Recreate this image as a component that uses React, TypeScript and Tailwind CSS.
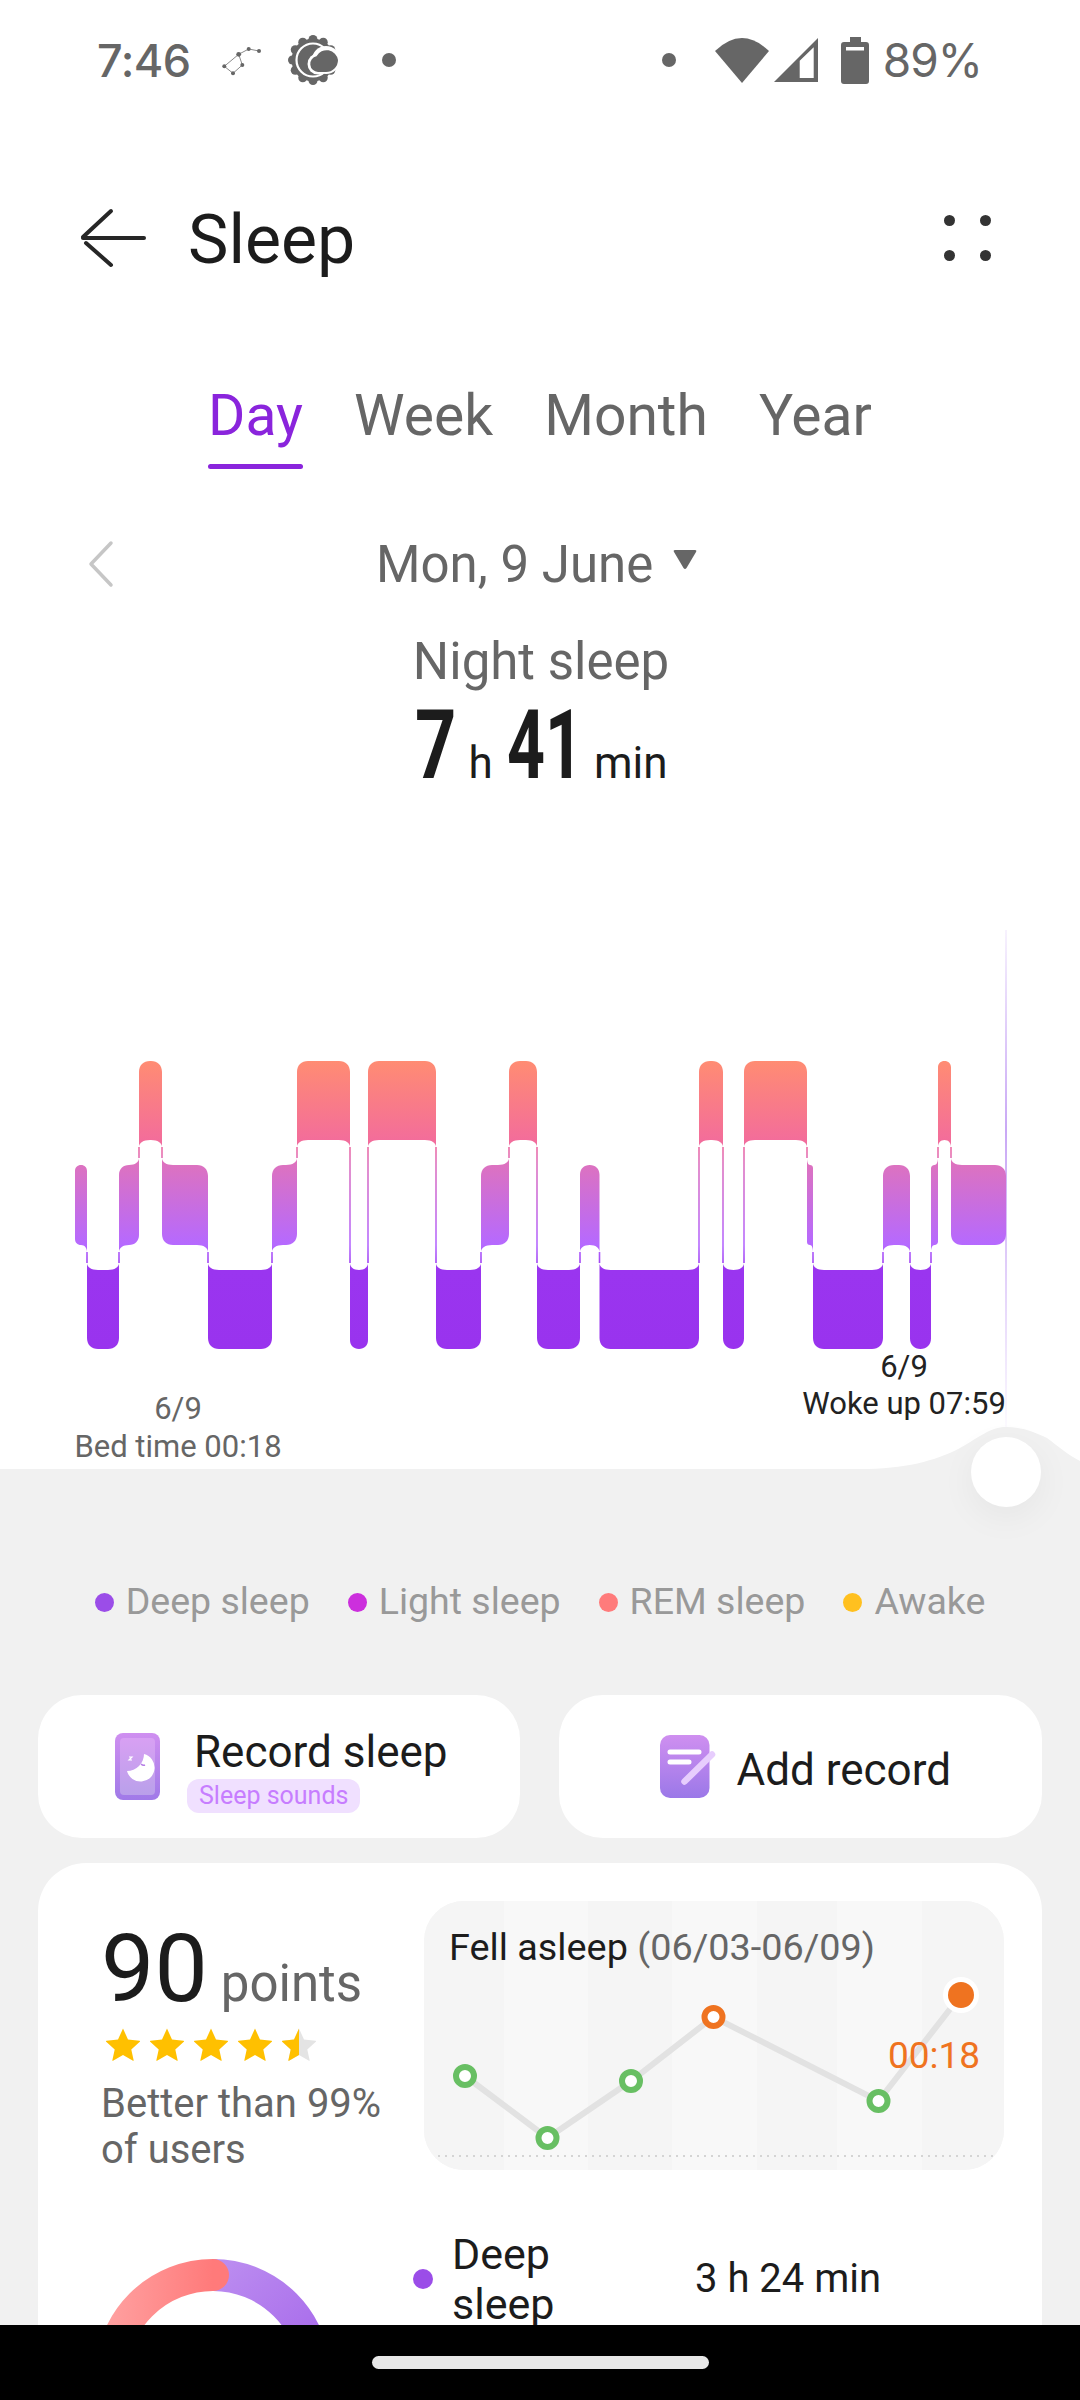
const roboto = "font-['Roboto',sans-serif]"

type Stage = "rem" | "light" | "deep"

const bands: Record<Stage, { top: number; bottom: number; rank: number }> = {
  rem: { top: 1061, bottom: 1140, rank: 2 },
  light: { top: 1165, bottom: 1245, rank: 1 },
  deep: { top: 1270, bottom: 1349, rank: 0 },
}

const segments: { stage: Stage; x0: number; x1: number }[] = [
  { stage: "light", x0: 75, x1: 87 },
  { stage: "deep", x0: 87, x1: 119 },
  { stage: "light", x0: 119, x1: 139 },
  { stage: "rem", x0: 139, x1: 162 },
  { stage: "light", x0: 162, x1: 208 },
  { stage: "deep", x0: 208, x1: 272 },
  { stage: "light", x0: 272, x1: 297 },
  { stage: "rem", x0: 297, x1: 350 },
  { stage: "deep", x0: 350, x1: 368 },
  { stage: "rem", x0: 368, x1: 436 },
  { stage: "deep", x0: 436, x1: 481 },
  { stage: "light", x0: 481, x1: 509 },
  { stage: "rem", x0: 509, x1: 537 },
  { stage: "deep", x0: 537, x1: 580 },
  { stage: "light", x0: 580, x1: 599.5 },
  { stage: "deep", x0: 599.5, x1: 699 },
  { stage: "rem", x0: 699, x1: 723 },
  { stage: "deep", x0: 723, x1: 744 },
  { stage: "rem", x0: 744, x1: 807 },
  { stage: "light", x0: 807, x1: 813 },
  { stage: "deep", x0: 813, x1: 883 },
  { stage: "light", x0: 883, x1: 910 },
  { stage: "deep", x0: 910, x1: 931 },
  { stage: "light", x0: 931, x1: 938 },
  { stage: "rem", x0: 938, x1: 951 },
  { stage: "light", x0: 951, x1: 1006 },
]

// rounded corner from the current point to (x, y), pulled toward (cx, cy)
function corner(fromX: number, fromY: number, cx: number, cy: number, x: number, y: number) {
  const k = 0.6
  return `C${fromX + (cx - fromX) * k} ${fromY + (cy - fromY) * k} ${x + (cx - x) * k} ${y + (cy - y) * k} ${x} ${y}`
}

function buildChartPath() {
  let d = ""
  segments.forEach((seg, i) => {
    const band = bands[seg.stage]
    const prev = segments[i - 1] ? bands[segments[i - 1].stage] : null
    const next = segments[i + 1] ? bands[segments[i + 1].stage] : null
    const r = Math.min(11, (seg.x1 - seg.x0) / 2)
    const { top: T, bottom: B } = band
    const { x0, x1 } = seg
    const tl = prev && prev.rank > band.rank ? T - 7 : T + r
    const tr = next && next.rank > band.rank ? T - 7 : T + r
    const bl = prev && prev.rank < band.rank ? B + 7 : B - r
    const br = next && next.rank < band.rank ? B + 7 : B - r
    d += `M${x0} ${tl}`
    d += corner(x0, tl, x0, T, x0 + r, T)
    d += `L${x1 - r} ${T}`
    d += corner(x1 - r, T, x1, T, x1, tr)
    d += `L${x1} ${br}`
    d += corner(x1, br, x1, B, x1 - r, B)
    d += `L${x0 + r} ${B}`
    d += corner(x0 + r, B, x0, B, x0, bl)
    d += "Z"
    if (next) {
      const upper = next.rank > band.rank ? next : band
      const lower = next.rank > band.rank ? band : next
      d += `M${x1 - 0.8} ${upper.bottom + 7}H${x1 + 0.8}V${lower.top - 7}H${x1 - 0.8}Z`
    }
  })
  return d
}

const trend = [
  { x: 466, y: 2076, hot: false },
  { x: 548.5, y: 2138, hot: false },
  { x: 632, y: 2081, hot: false },
  { x: 714.5, y: 2017, hot: true },
  { x: 879.5, y: 2101, hot: false },
]

function StatusBar() {
  return (
    <div className="h-[120px] flex items-center pl-[97px] pr-[98px] text-[#666] font-['Inter',sans-serif]">
      <span className="text-[45px] leading-none font-medium tracking-[-0.5px]">7:46</span>
      <svg width="42" height="32" viewBox="0 0 42 32" className="ml-[30px] mt-[4px]" fill="#666">
        <path d="M3.3 20.3L12 27.3L21.3 19L17.7 8.3L3.3 20.3M17.7 8.3L27.7 3L38 5" fill="none" stroke="#8a8a8a" strokeWidth="1" />
        <circle cx="3.3" cy="20.3" r="2" />
        <circle cx="12" cy="27.3" r="2" />
        <circle cx="21.3" cy="19" r="2" />
        <circle cx="17.7" cy="8.3" r="2.4" />
        <circle cx="27.7" cy="3" r="2" />
        <circle cx="38" cy="5" r="2" />
      </svg>
      <svg width="50" height="50" viewBox="0 0 50 50" className="ml-[25px]" fill="#666">
        <circle cx="25" cy="25" r="21.5" />
        {Array.from({ length: 12 }).map((_, i) => (
          <circle
            key={i}
            cx={25 + 20.5 * Math.cos((i * Math.PI) / 6)}
            cy={25 + 20.5 * Math.sin((i * Math.PI) / 6)}
            r="4.5"
          />
        ))}
        <circle cx="25" cy="25" r="16.5" fill="none" stroke="#fff" strokeWidth="2.2" />
        <g fill="#fff">
          <circle cx="38" cy="25" r="14" />
          <circle cx="30" cy="29" r="10.5" />
        </g>
        <path d="M30 37a8 8 0 0 1-1.5-15.8A11.5 11.5 0 0 1 50 25a12 12 0 0 1-12 12Z" />
      </svg>
      <span className="ml-[44px] w-[14px] h-[14px] rounded-full bg-[#666]" />
      <span className="ml-auto w-[14px] h-[14px] rounded-full bg-[#666]" />
      <svg width="54" height="45" viewBox="0 0 54 45" className="ml-[39px]" fill="#666">
        <path d="M27 45L0 13Q27 -13 54 13Z" />
      </svg>
      <svg width="44" height="44" viewBox="0 0 44 44" className="ml-[5px]" fill="#666">
        <path fillRule="evenodd" d="M0 44L44 0V44ZM25.7 40H39.7V9.3L25.7 22.7Z" />
      </svg>
      <svg width="28" height="47" viewBox="0 0 28 47" className="ml-[23px]">
        <path fill="#666" d="M9 0H20V5H25Q28 5 28 8V44Q28 47 25 47H3Q0 47 0 44V8Q0 5 3 5H9Z" />
        <rect x="5" y="10" width="18" height="3.5" fill="#fff" />
      </svg>
      <span className="ml-[14px] text-[46px] leading-none tracking-[-1px]">89%</span>
    </div>
  )
}

function Header() {
  return (
    <div className="mt-[68px] h-[100px] flex items-center pl-[80px] pr-[89px]">
      <svg width="68" height="60" viewBox="0 0 68 60" fill="none" stroke="#262626" strokeWidth="4" strokeLinecap="round">
        <path d="M3 30H64" />
        <path d="M31 3L3 29" />
        <path d="M6 35L31 57" />
      </svg>
      <span className={`${roboto} ml-[40px] mt-[3px] text-[68px] leading-none text-[#1c1c1c]`}>Sleep</span>
      <div className="ml-auto grid grid-cols-2 gap-x-[25px] gap-y-[24px]">
        <span className="w-[11px] h-[11px] rounded-full bg-[#333]" />
        <span className="w-[11px] h-[11px] rounded-full bg-[#333]" />
        <span className="w-[11px] h-[11px] rounded-full bg-[#333]" />
        <span className="w-[11px] h-[11px] rounded-full bg-[#333]" />
      </div>
    </div>
  )
}

function Tabs() {
  const tabs = ["Day", "Week", "Month", "Year"]
  return (
    <div className={`${roboto} mt-[96px] h-[89px] flex justify-center gap-[51px] text-[57px] leading-[64px] text-[#666]`}>
      {tabs.map((t, i) => (
        <div key={t} className="flex flex-col">
          <span className={i === 0 ? "text-[#8a24dc]" : ""}>{t}</span>
          {i === 0 && <span className="mt-[16px] h-[5px] rounded-full bg-[#8a24dc]" />}
        </div>
      ))}
    </div>
  )
}

function Summary() {
  return (
    <div className={roboto}>
      <div className="mt-[61px] h-[60px] flex items-center pl-[88px]">
        <svg width="26" height="48" viewBox="0 0 26 48" fill="none" stroke="#c6c6c6" strokeWidth="3.5" strokeLinecap="round" strokeLinejoin="round">
          <path d="M23 3L3 24L23 45" />
        </svg>
        <span className="ml-[262px] text-[51px] leading-none text-[#666]">Mon, 9 June</span>
        <svg width="24" height="20" viewBox="0 0 24 20" className="ml-[20px] mb-[8px]" fill="#666">
          <path d="M2 0H22Q24 0 23 2L13.5 18Q12 20 10.5 18L1 2Q0 0 2 0Z" />
        </svg>
      </div>
      <div className="mt-[37px] h-[60px] flex items-center justify-center pl-[2px] text-[51px] leading-none text-[#666]">
        Night sleep
      </div>
      <div className="h-[100px] flex items-baseline justify-center pt-[4px] text-[44px] leading-[100px] text-[#1c1c1c]">
        <span className="inline-block -ml-[4px] -mr-[7px] text-[96px] font-bold scale-x-[0.75]">7</span>
        <span className="ml-[12px]">h</span>
        <span className="inline-block -ml-[3px] -mr-[17px] text-[96px] font-bold scale-x-[0.69]">41</span>
        <span className="ml-[11px]">min</span>
      </div>
    </div>
  )
}

function SleepChart() {
  return (
    <div className={`${roboto} relative mt-[139px] h-[539px]`}>
      <svg width="1080" height="539" viewBox="0 930 1080 539" className="block">
        <defs>
          <linearGradient id="stages" gradientUnits="userSpaceOnUse" x1="0" y1="1061" x2="0" y2="1349">
            <stop offset="0" stopColor="#ff8c73" />
            <stop offset="0.274" stopColor="#f36d9a" />
            <stop offset="0.361" stopColor="#dc72c0" />
            <stop offset="0.639" stopColor="#b569ff" />
            <stop offset="0.726" stopColor="#9a35ef" />
            <stop offset="1" stopColor="#9933ee" />
          </linearGradient>
          <linearGradient id="cursor" gradientUnits="userSpaceOnUse" x1="0" y1="930" x2="0" y2="1430">
            <stop offset="0" stopColor="#c9a8f5" stopOpacity="0.15" />
            <stop offset="0.4" stopColor="#c9a8f5" />
            <stop offset="1" stopColor="#c9a8f5" stopOpacity="0.05" />
          </linearGradient>
        </defs>
        <rect x="1005" y="930" width="2" height="500" fill="url(#cursor)" />
        <path d={buildChartPath()} fill="url(#stages)" />
      </svg>
      <div className="absolute left-[66px] top-[460px] w-[224px] text-center text-[31px] leading-[38px] text-[#666]">
        <div>6/9</div>
        <div>Bed time 00:18</div>
      </div>
      <div className="absolute left-[792px] top-[418px] w-[224px] text-center text-[31px] leading-[37px] text-[#222]">
        <div>6/9</div>
        <div>Woke up 07:59</div>
      </div>
    </div>
  )
}

function Legend() {
  const items = [
    { label: "Deep sleep", color: "bg-[#9b4de8]" },
    { label: "Light sleep", color: "bg-[#cc2fdd]" },
    { label: "REM sleep", color: "bg-[#ff7b7b]" },
    { label: "Awake", color: "bg-[#ffc01f]" },
  ]
  return (
    <div className="h-[42px] flex items-center justify-center gap-[38px] text-[37.5px] leading-none text-[#999]">
      {items.map((item) => (
        <div key={item.label} className="flex items-center gap-[12px]">
          <span className={`w-[19px] h-[19px] rounded-full ${item.color}`} />
          <span>{item.label}</span>
        </div>
      ))}
    </div>
  )
}

function RecordButtons() {
  return (
    <div className="mt-[72px] flex gap-[39px] text-[#1c1c1c]">
      <div className="w-[483px] h-[143px] rounded-[44px] bg-white flex items-center pl-[77px]">
        <svg width="45" height="67" viewBox="0 0 45 67">
          <defs>
            <linearGradient id="recOuter" x1="0" y1="0" x2="0" y2="1">
              <stop offset="0" stopColor="#cf8ff0" />
              <stop offset="1" stopColor="#a07ae8" />
            </linearGradient>
            <linearGradient id="recInner" x1="0" y1="0" x2="0" y2="1">
              <stop offset="0" stopColor="#d8a0f3" />
              <stop offset="1" stopColor="#b9a0ea" />
            </linearGradient>
          </defs>
          <rect width="45" height="67" rx="8" fill="url(#recOuter)" />
          <rect x="5" y="5" width="35" height="57" rx="4" fill="url(#recInner)" />
          <path d="M29 21A14 14 0 1 1 12 38A17 17 0 0 0 29 21Z" fill="#fff" />
          <path d="M14 24H17L14 27H17" fill="none" stroke="#fff" strokeWidth="1.2" />
          <path d="M26 31Q28 33 30 32" fill="none" stroke="#b47ce6" strokeWidth="1.4" />
        </svg>
        <div className="ml-[27px] pt-[6px] flex flex-col items-start">
          <span className="ml-[7px] text-[44px] leading-[50px]">Record sleep</span>
          <span className="mt-[2px] h-[34px] px-[12px] rounded-[12px] bg-[#f0e0ff] text-[25px] leading-[33px] text-[#c77dff]">Sleep sounds</span>
        </div>
      </div>
      <div className="w-[483px] h-[143px] rounded-[44px] bg-white flex items-center pl-[101px]">
        <svg width="56" height="63" viewBox="0 0 56 63">
          <defs>
            <linearGradient id="addBg" x1="0" y1="0" x2="0" y2="1">
              <stop offset="0" stopColor="#cf8ff0" />
              <stop offset="1" stopColor="#9b78e8" />
            </linearGradient>
          </defs>
          <rect width="49.5" height="63" rx="10" fill="url(#addBg)" />
          <path d="M10 17H39M10 27H29" stroke="#fff" strokeWidth="5" strokeLinecap="round" fill="none" />
          <path d="M24.5 46.5L52 19.5" stroke="#e7cdfd" strokeWidth="6.5" strokeLinecap="round" fill="none" />
        </svg>
        <span className="ml-[20px] mt-[6px] text-[44px] leading-none">Add record</span>
      </div>
    </div>
  )
}

function Star({ fill }: { fill: "full" | "half" }) {
  const d = "M17 0.5L22 11.5L33.5 12.7Q34.5 13 33.8 13.8L25.3 21.5L27.7 32.5Q27.7 33 27 32.7L17 27L7 32.7Q6.3 33 6.3 32.5L8.7 21.5L0.2 13.8Q-0.5 13 0.5 12.7L12 11.5Z"
  return (
    <svg width="34" height="33" viewBox="0 0 34 33">
      <path d={d} fill={fill === "full" ? "#ffc000" : "#e4e4e4"} />
      {fill === "half" && (
        <path d="M17 0.5L12 11.5L0.5 12.7Q-0.5 13 0.2 13.8L8.7 21.5L6.3 32.5Q6.3 33 7 32.7L17 27Z" fill="#ffc000" />
      )}
    </svg>
  )
}

function TrendChart() {
  const stripes = [425, 505, 589, 673, 758, 838, 923]
  return (
    <div className="relative w-[580px] h-[269px] rounded-[40px] overflow-hidden bg-[#f5f5f5]">
      <svg width="580" height="269" viewBox="425 1901 580 269" className="block">
        {stripes.map((x, i) => (
          <rect key={x} x={x} y="1901" width={(stripes[i + 1] ?? 1005) - x} height="269" fill={i % 2 ? "#f8f8f8" : "#f5f5f5"} />
        ))}
        <path d="M432 2156H998" stroke="#d4d4d4" strokeWidth="2" strokeDasharray="2 5" fill="none" />
        <path d="M466 2076L548.5 2138L632 2081L714.5 2017L879.5 2101L962 1995" stroke="#e2e2e2" strokeWidth="6" fill="none" />
        {trend.map((p) => (
          <circle key={p.x} cx={p.x} cy={p.y} r="9" fill="#fff" stroke={p.hot ? "#ef7320" : "#68bf63"} strokeWidth="6" />
        ))}
        <circle cx="962" cy="1995" r="18" fill="#fff" />
        <circle cx="962" cy="1995" r="13" fill="#ef7320" />
      </svg>
      <div className="absolute left-[25px] top-[26px] text-[37.8px] leading-[40px] text-[#1c1c1c]">
        Fell asleep <span className="text-[#666]">(06/03-06/09)</span>
      </div>
      <div className="absolute left-[464px] top-[135px] text-[37px] leading-[40px] text-[#ef7320]">00:18</div>
    </div>
  )
}

function ScoreCard() {
  return (
    <div className="mt-[25px] rounded-[48px] bg-white pt-[38px] pr-[38px] pl-[63px] h-[700px]">
      <div className="flex justify-between">
        <div className="flex flex-col pt-[22px]">
          <div className="flex items-baseline">
            <span className="text-[95px] leading-[92px] text-[#1c1c1c]">90</span>
            <span className="ml-[13px] text-[51px] leading-[92px] text-[#666]">points</span>
          </div>
          <div className="-mt-[2px] ml-[5px] flex gap-[10px]">
            <Star fill="full" />
            <Star fill="full" />
            <Star fill="full" />
            <Star fill="full" />
            <Star fill="half" />
          </div>
          <div className="mt-[20px] w-[300px] text-[40px] leading-[46px] text-[#666]">Better than 99% of users</div>
        </div>
        <TrendChart />
      </div>
      <div className="mt-[56px] flex">
        <svg width="236" height="236" viewBox="0 0 236 236" className="mt-[30px] -ml-[6px] shrink-0">
          <defs>
            <linearGradient id="donutRem" x1="0" y1="0" x2="1" y2="0">
              <stop offset="0" stopColor="#ff9f9f" />
              <stop offset="1" stopColor="#ff7a7a" />
            </linearGradient>
            <linearGradient id="donutDeep" x1="0" y1="0" x2="1" y2="1">
              <stop offset="0" stopColor="#bb8cf0" />
              <stop offset="1" stopColor="#a566ea" />
            </linearGradient>
          </defs>
          <path d="M118 16A102 102 0 0 1 220 118" fill="none" stroke="url(#donutDeep)" strokeWidth="32" />
          <path d="M16 118A102 102 0 0 1 118 16" fill="none" stroke="url(#donutRem)" strokeWidth="32" strokeLinecap="round" />
        </svg>
        <div className="ml-[82px] flex items-center self-start text-[#1c1c1c]">
          <span className="w-[20px] h-[20px] rounded-full bg-[#9b4de8] shrink-0" />
          <span className="ml-[19px] w-[243px] pr-[90px] text-[43px] leading-[50px]">Deep sleep</span>
          <span className="text-[40px] leading-none">3 h 24 min</span>
        </div>
      </div>
    </div>
  )
}

export default function App() {
  return (
    <div className="w-[1080px] h-[2400px] flex flex-col overflow-hidden bg-white font-['Roboto',sans-serif]">
      <div className="flex-1 min-h-0 overflow-hidden">
        <StatusBar />
        <Header />
        <Tabs />
        <Summary />
        <SleepChart />
        <div className="relative bg-[#f1f1f1] px-[38px] pt-[112px]">
          <svg width="1080" height="43" viewBox="0 0 1080 43" className="absolute left-0 -top-[42px]" fill="#f1f1f1">
            <path d="M860 42C905 42 935 34 960 21C980 10 990 0 1006 0C1022 0 1035 5 1047 11C1058 19 1068 28 1080 34V43H860Z" />
          </svg>
          <div className="absolute left-[971px] -top-[32px] w-[70px] h-[70px] rounded-full bg-white shadow-[0_10px_36px_rgba(0,0,0,0.05)]" />
          <Legend />
          <RecordButtons />
          <ScoreCard />
        </div>
      </div>
      <div className="h-[75px] shrink-0 flex items-center justify-center bg-black">
        <span className="w-[337px] h-[13px] rounded-full bg-[#e8e8e8]" />
      </div>
    </div>
  )
}
